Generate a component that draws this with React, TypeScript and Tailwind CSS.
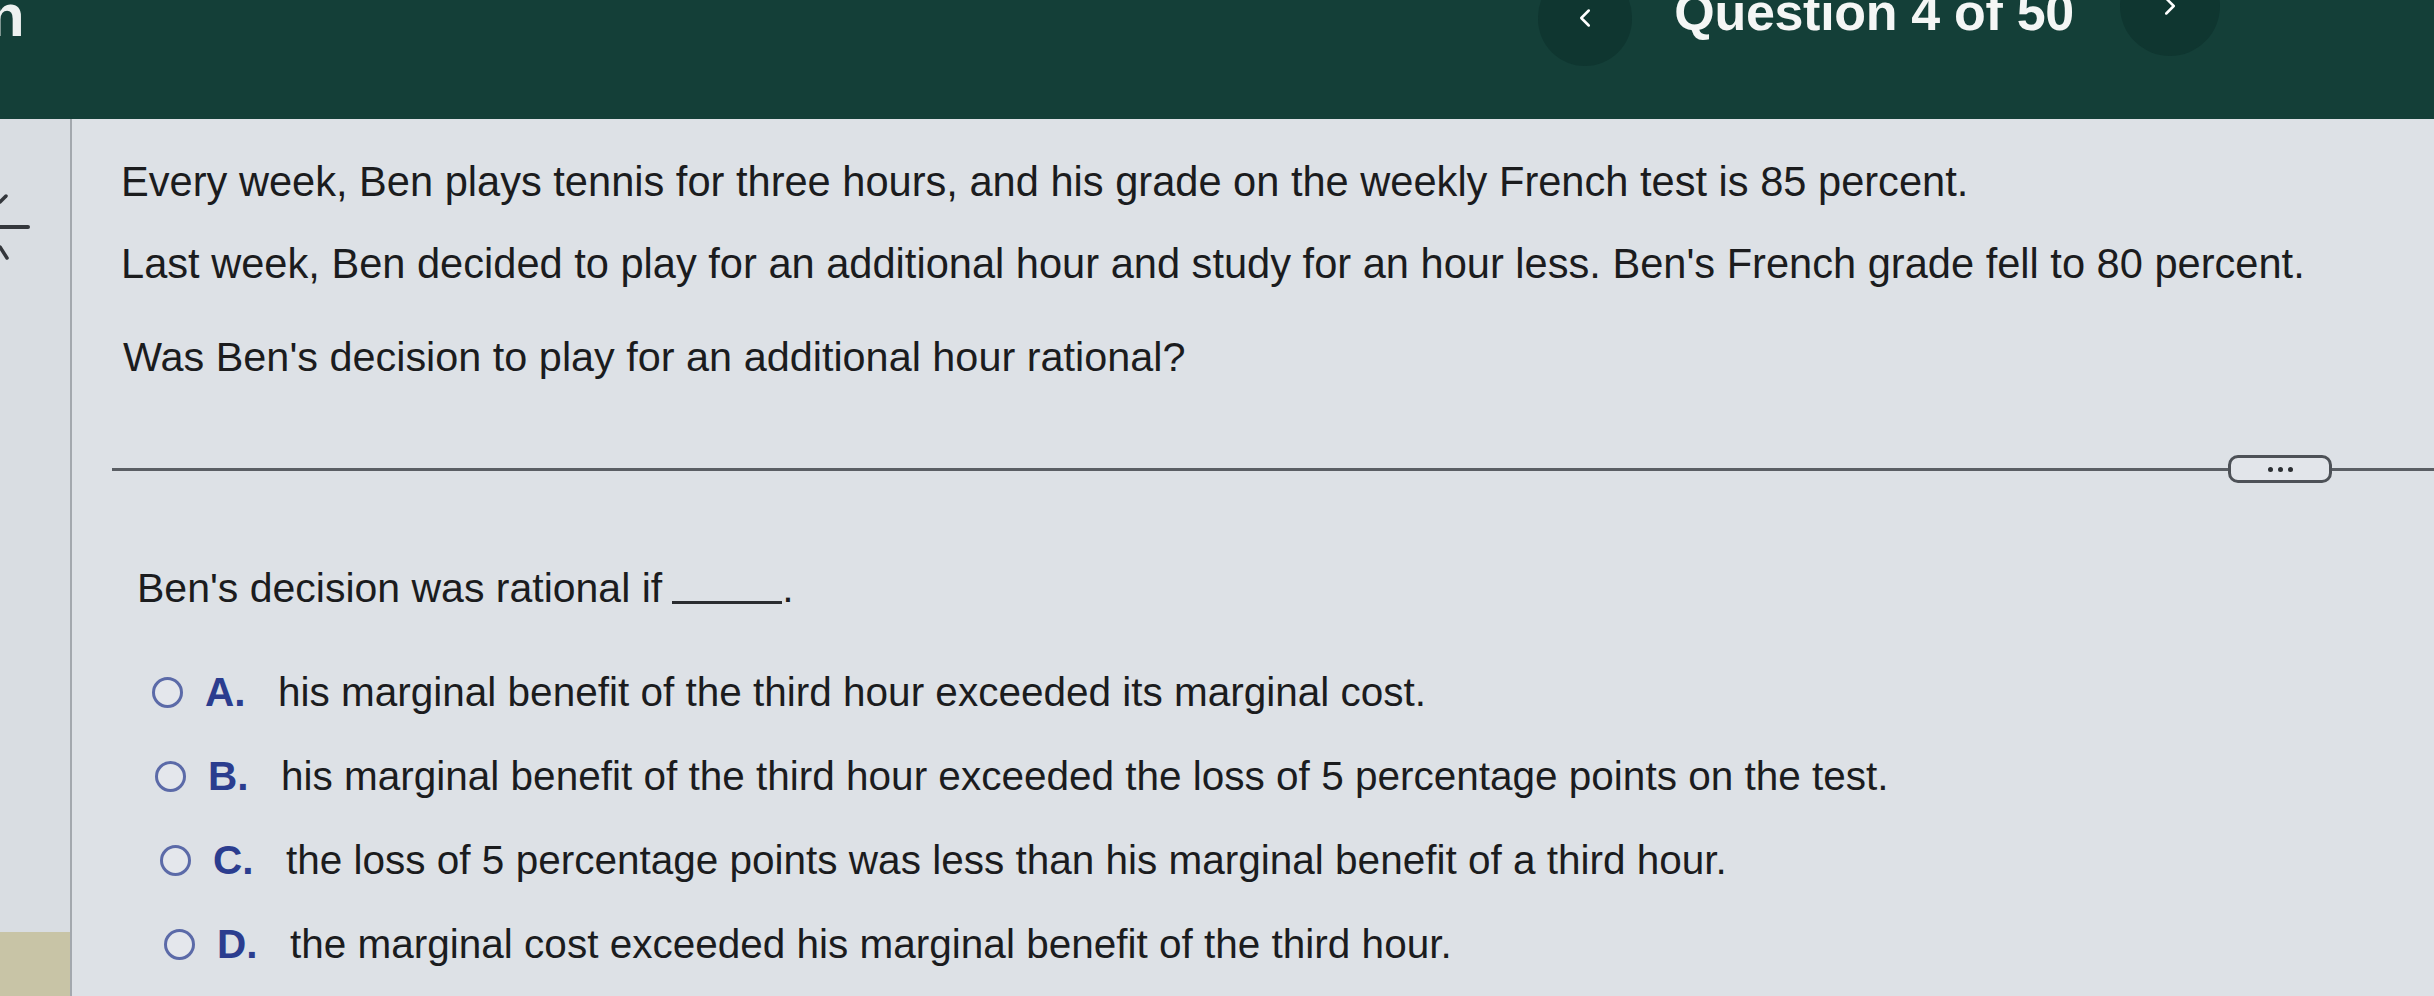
import { ChevronLeft, ChevronRight } from 'lucide-react';

const OPTIONS = [
  { key: 'A', text: 'his marginal benefit of the third hour exceeded its marginal cost.', shift: 'ml-0' },
  { key: 'B', text: 'his marginal benefit of the third hour exceeded the loss of 5 percentage points on the test.', shift: 'ml-[3px]' },
  { key: 'C', text: 'the loss of 5 percentage points was less than his marginal benefit of a third hour.', shift: 'ml-[8px]' },
  { key: 'D', text: 'the marginal cost exceeded his marginal benefit of the third hour.', shift: 'ml-[12px]' },
];

export default function App() {
  return (
    <div className="w-[2434px] h-[996px] overflow-hidden flex flex-col bg-[#dde1e6] font-['Liberation_Sans',Arial,sans-serif] text-[#1b1c1e]">
      {/* top bar */}
      <header className="h-[119px] shrink-0 overflow-hidden bg-[#143f38] flex items-start">
        <span className="-mt-[14px] -ml-[12px] text-[60px] font-bold leading-none text-[#eef1f0]">n</span>
        <div className="ml-auto mr-[214px] flex items-start">
          <button className="-mt-[30px] w-[94px] h-[96px] rounded-full bg-[#0f3630] flex items-center justify-center text-white">
            <ChevronLeft className="w-[30px] h-[30px]" strokeWidth={2} />
          </button>
          <span className="ml-[42px] -mt-[14px] text-[52px] font-bold leading-none text-[#f4f6f5] tracking-[-0.3px]">
            Question 4 of 50
          </span>
          <button className="ml-[46px] -mt-[44px] w-[100px] h-[100px] rounded-full bg-[#0f3630] flex items-center justify-center text-white">
            <ChevronRight className="w-[30px] h-[30px]" strokeWidth={2} />
          </button>
        </div>
      </header>

      <div className="flex flex-1 min-h-0">
        {/* left rail */}
        <aside className="w-[72px] shrink-0 bg-[#d9dde2] border-r-2 border-[#a3a8ae] flex flex-col">
          <svg className="mt-[74px]" width="32" height="70" viewBox="0 0 32 70" fill="none">
            <path d="M0 9 L6 3" stroke="#34373c" strokeWidth="3.5" strokeLinecap="round" />
            <path d="M0 34 H28" stroke="#34373c" strokeWidth="4" strokeLinecap="round" />
            <path d="M0 54 L7 65" stroke="#34373c" strokeWidth="3.5" strokeLinecap="round" />
          </svg>
          <div className="mt-auto h-[64px] bg-[#c8c4a6]" />
        </aside>

        {/* question */}
        <main className="flex-1 flex flex-col pt-[43px]">
          <div className="pl-[49px] flex flex-col text-[41.6px]">
            <p className="leading-[40px]">
              Every week, Ben plays tennis for three hours, and his grade on the weekly French test is 85 percent.
            </p>
            <p className="mt-[42px] leading-[40px]">
              Last week, Ben decided to play for an additional hour and study for an hour less. Ben&apos;s French grade fell to 80 percent.
            </p>
            <p className="mt-[53px] leading-[40px] text-[41.4px] pl-[2px]">
              Was Ben&apos;s decision to play for an additional hour rational?
            </p>
          </div>

          <div className="mt-[78px] ml-[40px] h-[28px] flex items-center">
            <div className="flex-1 h-[3px] bg-[#5a5e64]" />
            <div className="w-[104px] h-[28px] rounded-[10px] border-[3px] border-[#4d5157] bg-[#e2e5ea] flex items-center justify-center gap-[5px]">
              <span className="w-[5px] h-[5px] rounded-full bg-[#2c2f33]" />
              <span className="w-[5px] h-[5px] rounded-full bg-[#2c2f33]" />
              <span className="w-[5px] h-[5px] rounded-full bg-[#2c2f33]" />
            </div>
            <div className="w-[102px] h-[3px] bg-[#5a5e64]" />
          </div>

          <p className="mt-[85px] pl-[65px] text-[41px] leading-[40px]">
            Ben&apos;s decision was rational if
            <span className="inline-block w-[110px] ml-[10px] border-b-[3px] border-[#2a2c30] align-baseline translate-y-[2px]" />
            .
          </p>

          <ul className="mt-[64px] pl-[80px] flex flex-col gap-[44px] text-[40.5px]">
            {OPTIONS.map((o) => (
              <li key={o.key} className={`flex items-center h-[40px] ${o.shift}`}>
                <span className="w-[31px] h-[31px] rounded-full border-[3px] border-[#5b6aa8] bg-[#e4e7ec]" />
                <span className="ml-[22px] w-[73px] font-bold text-[#2b3d8f]">{o.key}.</span>
                <span>{o.text}</span>
              </li>
            ))}
          </ul>
        </main>
      </div>
    </div>
  );
}
